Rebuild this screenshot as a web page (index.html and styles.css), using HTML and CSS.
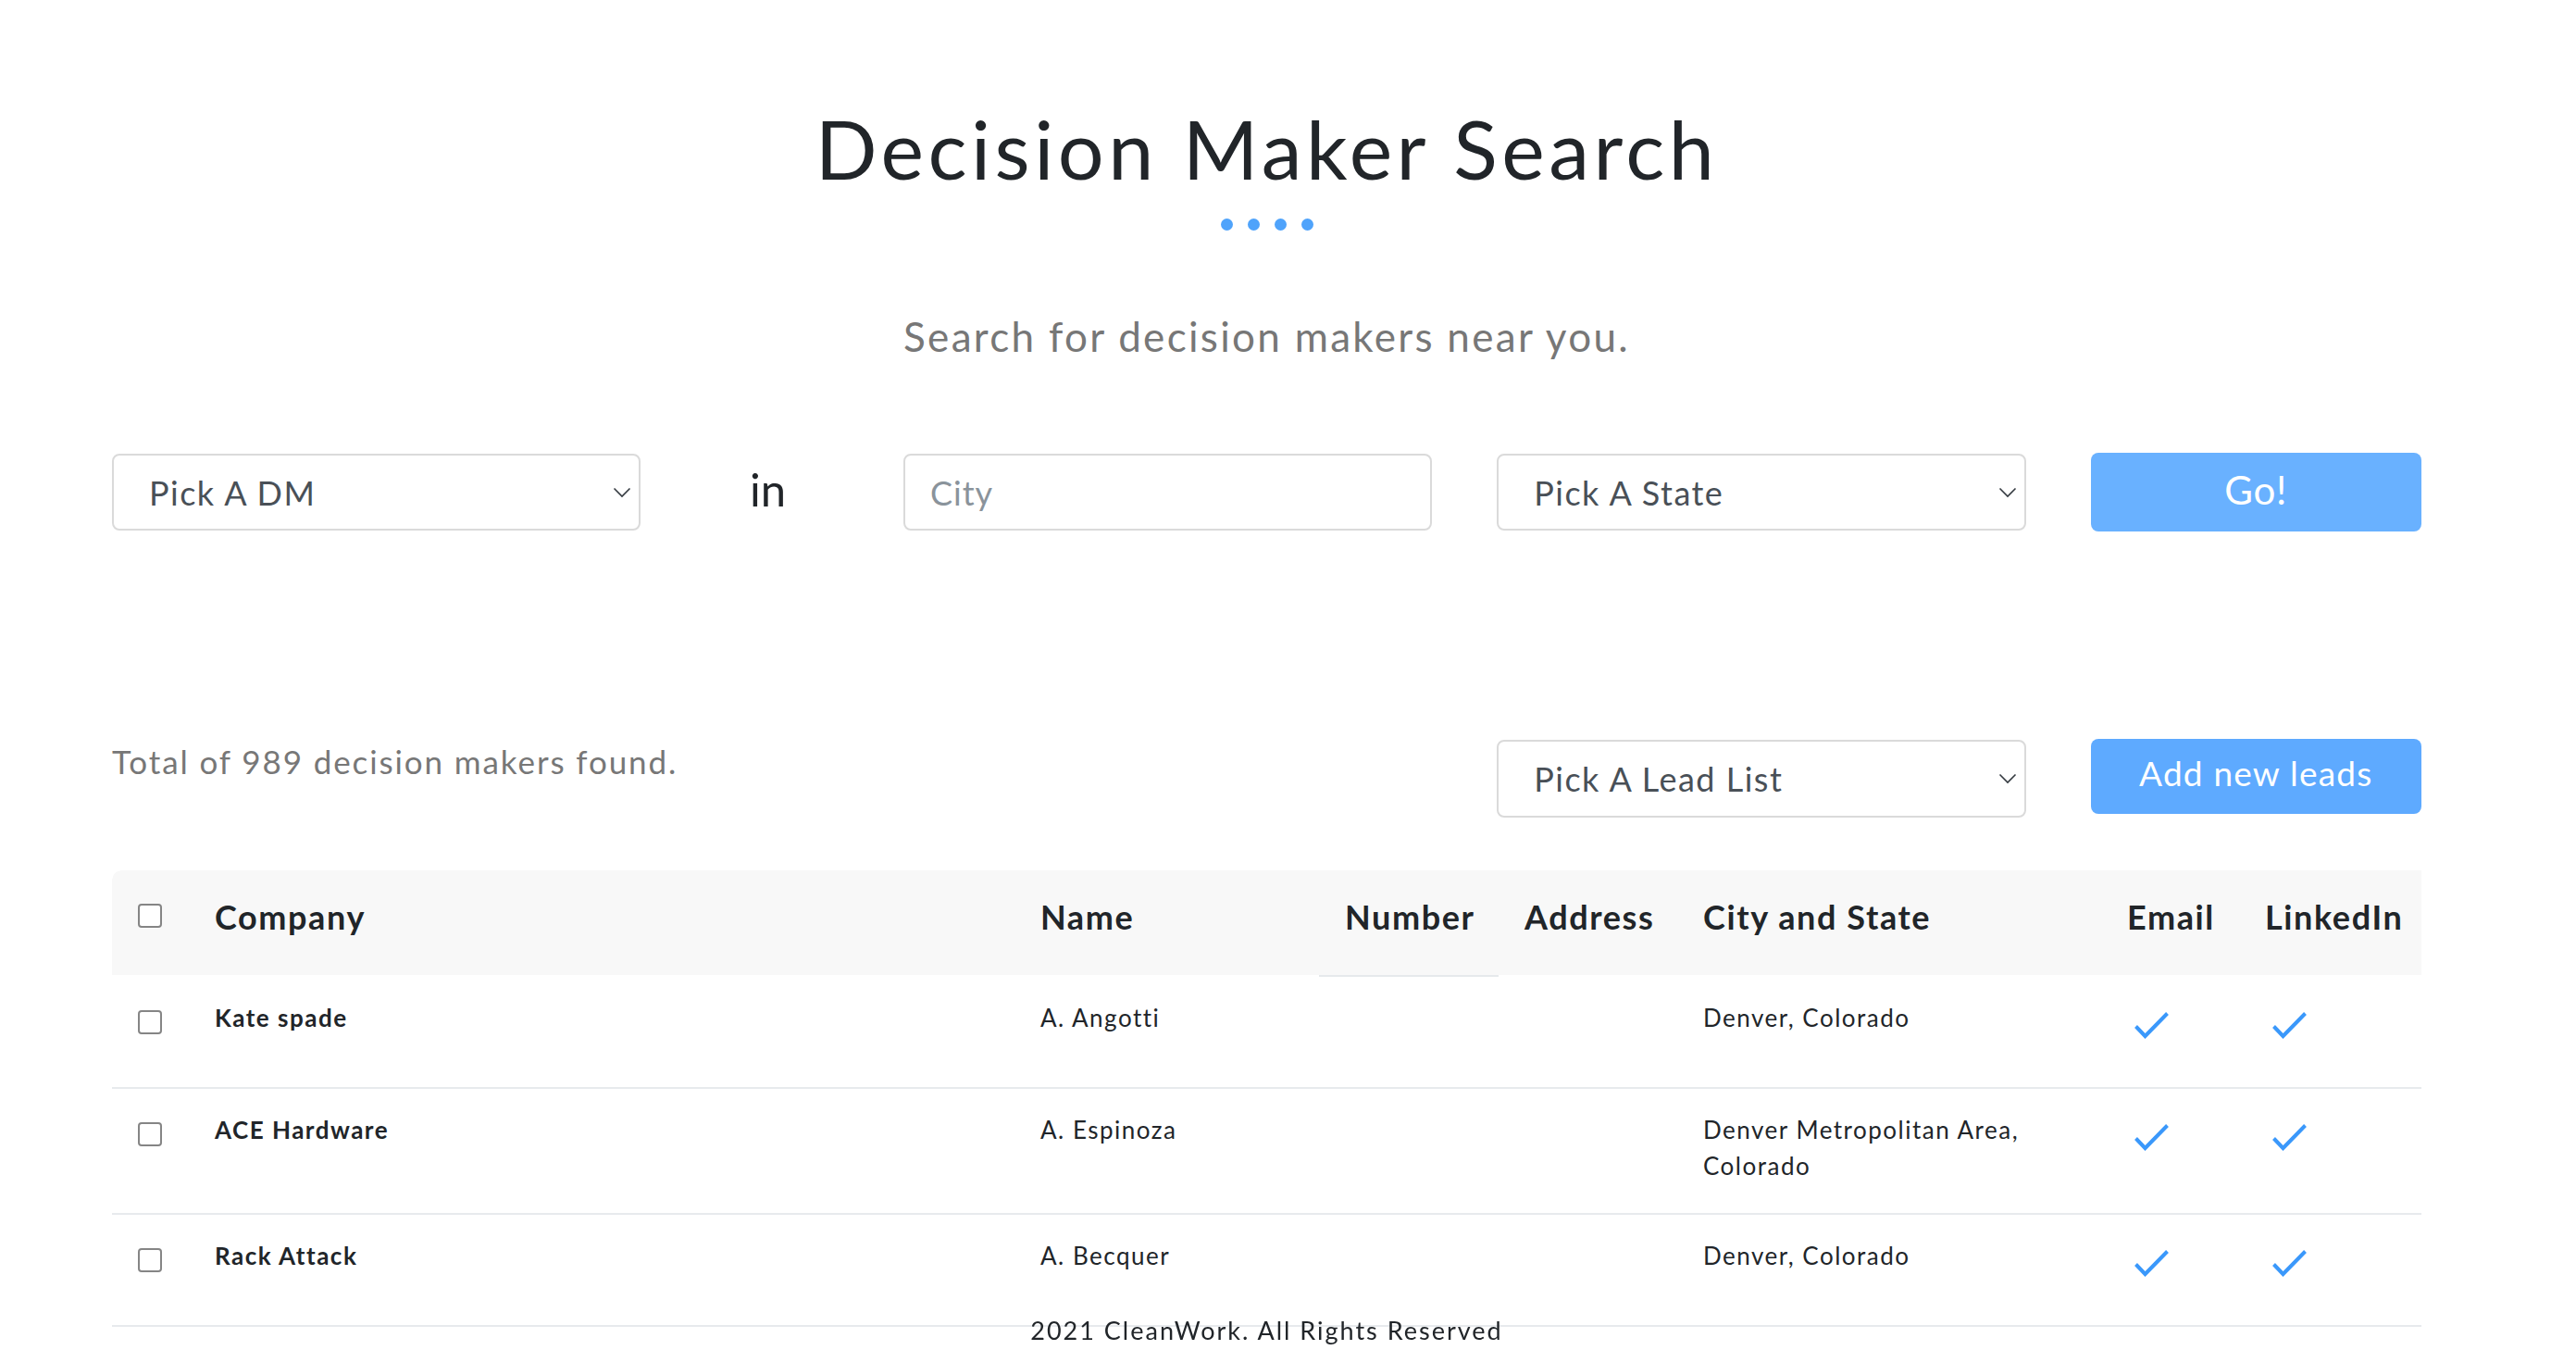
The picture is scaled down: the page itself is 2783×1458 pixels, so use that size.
FILE: index.html
```html
<!DOCTYPE html>
<html lang="en">
<head>
<meta charset="utf-8">
<title>Decision Maker Search</title>
<link rel="stylesheet" href="styles.css">
</head>
<body>
<main class="page">
  <h1 class="title">Decision Maker Search</h1>
  <div class="dots"><span></span><span></span><span></span><span></span></div>
  <p class="subtitle">Search for decision makers near you.</p>

  <form class="search-row">
    <div class="select-wrap span-3">
      <select class="control select"><option>Pick A DM</option></select>
      <svg class="chev" viewBox="0 0 20 12" width="20" height="12"><path d="M1.5 1.5 L10 10 L18.5 1.5" fill="none" stroke="#343a40" stroke-width="1.6"/></svg>
    </div>
    <div class="in-label">in</div>
    <input class="control input span-3" type="text" placeholder="City">
    <div class="select-wrap span-3">
      <select class="control select"><option>Pick A State</option></select>
      <svg class="chev" viewBox="0 0 20 12" width="20" height="12"><path d="M1.5 1.5 L10 10 L18.5 1.5" fill="none" stroke="#343a40" stroke-width="1.6"/></svg>
    </div>
    <button class="btn btn-go span-2" type="button">Go!</button>
  </form>

  <div class="results-row">
    <p class="total">Total of 989 decision makers found.</p>
    <div class="select-wrap lead">
      <select class="control select select-lead"><option>Pick A Lead List</option></select>
      <svg class="chev" viewBox="0 0 20 12" width="20" height="12"><path d="M1.5 1.5 L10 10 L18.5 1.5" fill="none" stroke="#343a40" stroke-width="1.6"/></svg>
    </div>
    <button class="btn btn-add span-2" type="button">Add new leads</button>
  </div>

  <table class="dm-table">
    <colgroup>
      <col class="c-check"><col class="c-company"><col class="c-name"><col class="c-number"><col class="c-address"><col class="c-city"><col class="c-email"><col class="c-linkedin">
    </colgroup>
    <thead>
      <tr>
        <th class="th-first"><input class="box box-head" type="checkbox"></th>
        <th>Company</th>
        <th>Name</th>
        <th class="th-num">Number</th>
        <th>Address</th>
        <th>City and State</th>
        <th>Email</th>
        <th>LinkedIn</th>
      </tr>
    </thead>
    <tbody>
      <tr>
        <td><input class="box" type="checkbox"></td>
        <td class="company">Kate spade</td>
        <td>A. Angotti</td>
        <td></td>
        <td></td>
        <td>Denver, Colorado</td>
        <td><svg class="check" viewBox="0 0 48 63" width="48" height="63"><path d="M9.5 28.5 L19.5 39 L43.5 14.5" fill="none" stroke="#3a98fb" stroke-width="4"/></svg></td>
        <td><svg class="check" viewBox="0 0 48 63" width="48" height="63"><path d="M9.5 28.5 L19.5 39 L43.5 14.5" fill="none" stroke="#3a98fb" stroke-width="4"/></svg></td>
      </tr>
      <tr>
        <td><input class="box" type="checkbox"></td>
        <td class="company">ACE Hardware</td>
        <td>A. Espinoza</td>
        <td></td>
        <td></td>
        <td>Denver Metropolitan Area, Colorado</td>
        <td><svg class="check" viewBox="0 0 48 63" width="48" height="63"><path d="M9.5 28.5 L19.5 39 L43.5 14.5" fill="none" stroke="#3a98fb" stroke-width="4"/></svg></td>
        <td><svg class="check" viewBox="0 0 48 63" width="48" height="63"><path d="M9.5 28.5 L19.5 39 L43.5 14.5" fill="none" stroke="#3a98fb" stroke-width="4"/></svg></td>
      </tr>
      <tr>
        <td><input class="box" type="checkbox"></td>
        <td class="company">Rack Attack</td>
        <td>A. Becquer</td>
        <td></td>
        <td></td>
        <td>Denver, Colorado</td>
        <td><svg class="check" viewBox="0 0 48 63" width="48" height="63"><path d="M9.5 28.5 L19.5 39 L43.5 14.5" fill="none" stroke="#3a98fb" stroke-width="4"/></svg></td>
        <td><svg class="check" viewBox="0 0 48 63" width="48" height="63"><path d="M9.5 28.5 L19.5 39 L43.5 14.5" fill="none" stroke="#3a98fb" stroke-width="4"/></svg></td>
      </tr>
    </tbody>
  </table>
</main>
<footer class="footer">2021 CleanWork. All Rights Reserved</footer>
</body>
</html>
```

FILE: styles.css
```css
* { box-sizing: border-box; }

body {
  margin: 0;
  background: #fff;
  color: #212529;
  font-family: Lato, "Noto Sans", sans-serif;
}

.page {
  width: 2495px;
  margin-left: 121px;
  padding-top: 108px;
}

.title {
  margin: 0;
  font-size: 88px;
  line-height: 1.2;
  font-weight: 400;
  letter-spacing: 4.5px;
  text-align: center;
  color: #212529;
}

.dots {
  display: flex;
  justify-content: center;
  gap: 16px;
  margin-top: 22px;
}
.dots span {
  width: 13px;
  height: 13px;
  border-radius: 50%;
  background: #4fa3fb;
}

.subtitle {
  margin: 88px 0 0;
  font-size: 44px;
  line-height: 1.2;
  letter-spacing: 2.3px;
  color: #777;
  text-align: center;
}

.search-row,
.results-row {
  display: grid;
  grid-template-columns: repeat(12, 1fr);
  column-gap: 70px;
}
.search-row {
  margin-top: 100px;
  align-items: center;
}
.results-row {
  margin-top: 224px;
  align-items: start;
}

.span-3 { grid-column: span 3; }
.span-2 { grid-column: span 2; }

.select-wrap { position: relative; }
.select-wrap.lead { grid-column: 8 / span 3; margin-top: 1px; }

.control {
  display: block;
  width: 100%;
  height: 83px;
  margin: 0;
  border: 2px solid #dadada;
  border-radius: 8px;
  background: #fff;
  font-family: Lato, "Noto Sans", sans-serif;
  font-size: 36px;
  letter-spacing: 1.5px;
  color: #495057;
  outline: none;
}
.select {
  appearance: none;
  -webkit-appearance: none;
  padding: 0 50px 0 38px;
}
.select-lead { height: 84px; }
.input { padding: 0 27px; letter-spacing: 1px; }
.input::placeholder { color: #8a939b; }

.chev {
  position: absolute;
  right: 10px;
  top: 36px;
  width: 20px;
  height: 12px;
}

.in-label {
  align-self: start;
  margin-top: 10px;
  font-size: 49px;
  line-height: 1.2;
  text-align: center;
  padding-right: 9px;
  color: #212529;
}

.btn {
  border: 0;
  border-radius: 8px;
  color: #fff;
  font-family: Lato, "Noto Sans", sans-serif;
  cursor: pointer;
  line-height: 1.2;
}
.btn-go {
  height: 85px;
  background: #69b1ff;
  font-size: 42px;
  letter-spacing: 0.8px;
  padding: 0 0 6px;
}
.btn-add {
  grid-column: 11 / span 2;
  height: 81px;
  background: #5eaaff;
  font-size: 37px;
  letter-spacing: 1.2px;
  padding: 0 0 8px;
}

.total {
  grid-column: 1 / span 6;
  margin: 3px 0 0;
  font-size: 35px;
  line-height: 1.2;
  letter-spacing: 1.9px;
  color: #777;
}

.dm-table {
  width: 100%;
  margin-top: 57px;
  border-collapse: separate;
  border-spacing: 0;
  table-layout: fixed;
}
.c-check { width: 83px; }
.c-company { width: 892px; }
.c-name { width: 329px; }
.c-number { width: 194px; }
.c-address { width: 193px; }
.c-city { width: 458px; }
.c-email { width: 149px; }
.c-linkedin { width: 197px; }

.dm-table th {
  padding: 29px 28px 40px;
  background: #f8f8f8;
  background-clip: padding-box;
  border-bottom: 2px solid transparent;
  font-size: 36px;
  font-weight: 700;
  line-height: 1.2;
  letter-spacing: 1.6px;
  text-align: left;
  vertical-align: top;
  white-space: nowrap;
}
.dm-table .th-first { border-top-left-radius: 10px; }
.dm-table .th-num { border-bottom-color: #e6e9ec; }

.dm-table td {
  padding: 25.5px 28px 30.5px;
  border-bottom: 2px solid #e7eaed;
  font-size: 26px;
  line-height: 1.5;
  letter-spacing: 1.5px;
  vertical-align: top;
}
.dm-table td.company { font-weight: 700; }

.box {
  appearance: none;
  -webkit-appearance: none;
  display: block;
  width: 26px;
  height: 26px;
  margin: 11px 0 0;
  border: 2px solid #858585;
  border-radius: 4px;
  background: #fff;
}
.box-head { margin-top: 7px; }

.check { display: block; }

.footer {
  position: fixed;
  left: 121px;
  bottom: 5px;
  width: 2495px;
  text-align: center;
  font-size: 27px;
  line-height: 1.2;
  letter-spacing: 2px;
  color: #212529;
}
```
